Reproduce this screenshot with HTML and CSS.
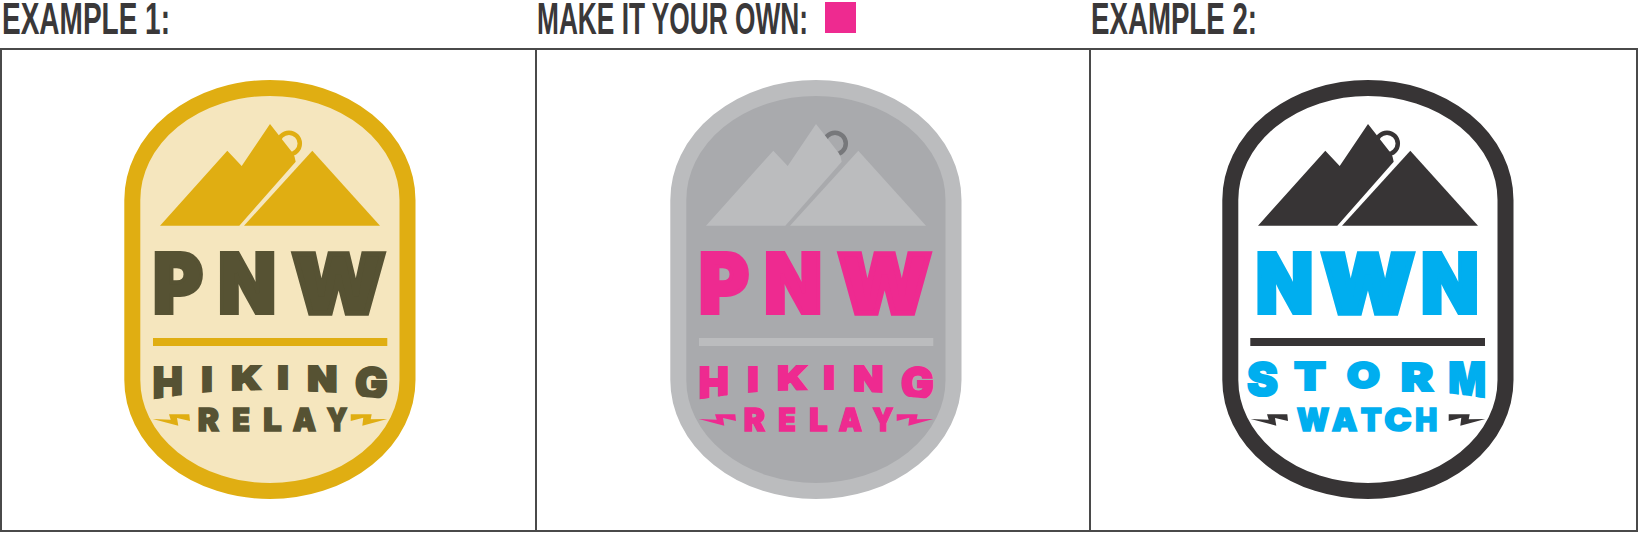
FILE: index.html
```html
<!DOCTYPE html>
<html lang="en">
<head>
<meta charset="utf-8">
<title>Badge examples</title>
<link rel="stylesheet" href="styles.css">
</head>
<body>
<div class="page">
  <header class="heads">
    <div class="head"><svg class="label" width="280" height="44"><text x="0" y="34" textLength="168" lengthAdjust="spacingAndGlyphs">EXAMPLE 1:</text></svg></div>
    <div class="head"><svg class="label" width="450" height="44"><text x="0" y="34" textLength="271" lengthAdjust="spacingAndGlyphs">MAKE IT YOUR OWN:</text></svg><span class="swatch"></span></div>
    <div class="head"><svg class="label" width="280" height="44"><text x="0" y="34" textLength="166" lengthAdjust="spacingAndGlyphs">EXAMPLE 2:</text></svg></div>
  </header>
  <main class="frame">
    <section class="panel panel-a">
      <svg class="badge badge-a" viewBox="124 80 292 420" width="292" height="420">
        <defs>
          <clipPath id="arc-hiking"><polygon points="150,360 390,360 390,399.5 355,396 337,393 307,391.5 288,390 278,390 262,390.3 231,391 212,392 202,393 183,395 152,399.5"/></clipPath>
        </defs>
        <path class="shell" d="M132.3 200A137.6 112 0 0 1 407.5 200V380A137.6 111 0 0 1 132.3 380Z"/>
        <circle class="ring" cx="289" cy="143.5" r="10.8"/>
        <path class="peak" d="M160 225.7L227.3 150.7L241.7 166L270 124L292.5 152.7L294.5 156.5L295.7 161.7L239.3 225.7Z"/>
        <path class="peak" d="M312.3 150.7L380 225.7H244Z"/>
        <text class="big" x="153" y="313" textLength="50" lengthAdjust="spacingAndGlyphs">P</text>
        <text class="big" x="218.3" y="313" textLength="57.7" lengthAdjust="spacingAndGlyphs">N</text>
        <text class="big wide" x="292.5" y="312.5" textLength="92.3" lengthAdjust="spacingAndGlyphs">W</text>
        <rect class="bar" x="153" y="338" width="234.3" height="8"/>
        <g clip-path="url(#arc-hiking)">
          <text class="word" font-size="44" x="152.7" y="398.5" textLength="30" lengthAdjust="spacingAndGlyphs">H</text>
          <text class="word" font-size="34.7" x="201.5" y="391.6" textLength="11" lengthAdjust="spacingAndGlyphs">I</text>
          <text class="word" font-size="32.7" x="231.3" y="390" textLength="30.4" lengthAdjust="spacingAndGlyphs">K</text>
          <text class="word" font-size="31.6" x="277.5" y="389.2" textLength="11" lengthAdjust="spacingAndGlyphs">I</text>
          <text class="word" font-size="35.2" x="307.3" y="392" textLength="30" lengthAdjust="spacingAndGlyphs">N</text>
          <text class="word" font-size="44" x="355" y="398.5" textLength="32.7" lengthAdjust="spacingAndGlyphs">G</text>
        </g>
        <g class="small">
          <text x="197.7" y="431" textLength="21.3" lengthAdjust="spacingAndGlyphs">R</text>
          <text x="232.3" y="431" textLength="17.7" lengthAdjust="spacingAndGlyphs">E</text>
          <text x="263.3" y="431" textLength="18.4" lengthAdjust="spacingAndGlyphs">L</text>
          <text x="292.7" y="431" textLength="23.3" lengthAdjust="spacingAndGlyphs">A</text>
          <text x="326.7" y="431" textLength="20.6" lengthAdjust="spacingAndGlyphs">Y</text>
        </g>
        <path class="bolt" d="M152.7 419L170.7 419.7L169 414.3H189.3L190 421L177 418L178.3 425.7Z"/>
        <path class="bolt" d="M350.7 414.3H371.7L370.7 419.3L387.3 419L362.3 425.7L363.3 417.7L350.7 421Z"/>
      </svg>
    </section>
    <section class="panel panel-b">
      <svg class="badge badge-b" viewBox="124 80 292 420" width="292" height="420">
        <defs>
          <clipPath id="arc-hiking-b"><polygon points="150,360 390,360 390,399.5 355,396 337,393 307,391.5 288,390 278,390 262,390.3 231,391 212,392 202,393 183,395 152,399.5"/></clipPath>
        </defs>
        <path class="shell" d="M132.3 200A137.6 112 0 0 1 407.5 200V380A137.6 111 0 0 1 132.3 380Z"/>
        <circle class="ring" cx="289" cy="143.5" r="10.8"/>
        <path class="peak" d="M160 225.7L227.3 150.7L241.7 166L270 124L292.5 152.7L294.5 156.5L295.7 161.7L239.3 225.7Z"/>
        <path class="peak" d="M312.3 150.7L380 225.7H244Z"/>
        <text class="big" x="153" y="313" textLength="50" lengthAdjust="spacingAndGlyphs">P</text>
        <text class="big" x="218.3" y="313" textLength="57.7" lengthAdjust="spacingAndGlyphs">N</text>
        <text class="big wide" x="292.5" y="312.5" textLength="92.3" lengthAdjust="spacingAndGlyphs">W</text>
        <rect class="bar" x="153" y="338" width="234.3" height="8"/>
        <g clip-path="url(#arc-hiking-b)">
          <text class="word" font-size="44" x="152.7" y="398.5" textLength="30" lengthAdjust="spacingAndGlyphs">H</text>
          <text class="word" font-size="34.7" x="201.5" y="391.6" textLength="11" lengthAdjust="spacingAndGlyphs">I</text>
          <text class="word" font-size="32.7" x="231.3" y="390" textLength="30.4" lengthAdjust="spacingAndGlyphs">K</text>
          <text class="word" font-size="31.6" x="277.5" y="389.2" textLength="11" lengthAdjust="spacingAndGlyphs">I</text>
          <text class="word" font-size="35.2" x="307.3" y="392" textLength="30" lengthAdjust="spacingAndGlyphs">N</text>
          <text class="word" font-size="44" x="355" y="398.5" textLength="32.7" lengthAdjust="spacingAndGlyphs">G</text>
        </g>
        <g class="small">
          <text x="197.7" y="431" textLength="21.3" lengthAdjust="spacingAndGlyphs">R</text>
          <text x="232.3" y="431" textLength="17.7" lengthAdjust="spacingAndGlyphs">E</text>
          <text x="263.3" y="431" textLength="18.4" lengthAdjust="spacingAndGlyphs">L</text>
          <text x="292.7" y="431" textLength="23.3" lengthAdjust="spacingAndGlyphs">A</text>
          <text x="326.7" y="431" textLength="20.6" lengthAdjust="spacingAndGlyphs">Y</text>
        </g>
        <path class="bolt" d="M152.7 419L170.7 419.7L169 414.3H189.3L190 421L177 418L178.3 425.7Z"/>
        <path class="bolt" d="M350.7 414.3H371.7L370.7 419.3L387.3 419L362.3 425.7L363.3 417.7L350.7 421Z"/>
      </svg>
    </section>
    <section class="panel panel-c">
      <svg class="badge badge-c" viewBox="124 80 292 420" width="292" height="420">
        <defs>
          <clipPath id="arc-storm"><polygon points="140,355 395,355 395,399.5 372,396 350,393.3 340,392 140,400"/></clipPath>
        </defs>
        <path class="shell" d="M132.3 200A137.6 112 0 0 1 407.5 200V380A137.6 111 0 0 1 132.3 380Z"/>
        <circle class="ring" cx="289" cy="143.5" r="10.8"/>
        <path class="peak" d="M160 225.7L227.3 150.7L241.7 166L270 124L292.5 152.7L294.5 156.5L295.7 161.7L239.3 225.7Z"/>
        <path class="peak" d="M312.3 150.7L380 225.7H244Z"/>
        <text class="big" x="157.7" y="313.3" textLength="57.6" lengthAdjust="spacingAndGlyphs">N</text>
        <text class="big wide" x="223.8" y="312.8" textLength="92.4" lengthAdjust="spacingAndGlyphs">W</text>
        <text class="big" x="323" y="313.3" textLength="57.7" lengthAdjust="spacingAndGlyphs">N</text>
        <rect class="bar" x="152.3" y="338" width="234.7" height="8"/>
        <g clip-path="url(#arc-storm)">
          <text class="word" font-size="46.5" x="149" y="396" textLength="31" lengthAdjust="spacingAndGlyphs">S</text>
          <text class="word" font-size="38.5" x="196" y="390.3" textLength="32" lengthAdjust="spacingAndGlyphs">T</text>
          <text class="word" font-size="36" x="248.7" y="388" textLength="33.3" lengthAdjust="spacingAndGlyphs">O</text>
          <text class="word" font-size="39" x="302.7" y="390.7" textLength="32.6" lengthAdjust="spacingAndGlyphs">R</text>
          <text class="word" font-size="49.5" x="350.3" y="398.2" textLength="37.7" lengthAdjust="spacingAndGlyphs">M</text>
        </g>
        <g class="small">
          <text x="198.7" y="431" textLength="32.6" lengthAdjust="spacingAndGlyphs">W</text>
          <text x="233.7" y="431" textLength="25.6" lengthAdjust="spacingAndGlyphs">A</text>
          <text x="262.7" y="431" textLength="21" lengthAdjust="spacingAndGlyphs">T</text>
          <text x="286.3" y="431" textLength="27.4" lengthAdjust="spacingAndGlyphs">C</text>
          <text x="317.3" y="431" textLength="22" lengthAdjust="spacingAndGlyphs">H</text>
        </g>
        <path class="bolt" d="M152.7 419L170.7 419.7L169 414.3H189.3L190 421L177 418L178.3 425.7Z"/>
        <path class="bolt" d="M350.7 414.3H371.7L370.7 419.3L387.3 419L362.3 425.7L363.3 417.7L350.7 421Z"/>
      </svg>
    </section>
  </main>
</div>
</body>
</html>
```
FILE: styles.css
```css
* { box-sizing: border-box; }
html, body { margin: 0; padding: 0; background: #fff; overflow: hidden; }

.page { width: 1638px; height: 533px; }

.heads {
  display: grid;
  grid-template-columns: 535px 554px 1fr;
  height: 48px;
}
.head {
  display: flex;
  align-items: flex-start;
  height: 48px;
  padding-left: 2px;
}

.label { display: block; flex: none; }
.label text {
  font-family: "Liberation Sans", sans-serif;
  font-weight: 700;
  font-size: 45px;
  fill: #3a3839;
}
.swatch {
  flex: none;
  width: 31px;
  height: 31px;
  margin: 2px 0 0 -162px;
  background: #ee2a90;
}

.frame {
  display: grid;
  grid-template-columns: 533px 554px 1fr;
  height: 484px;
  border: 2px solid #4a4a4a;
}
.panel { padding-top: 30px; min-width: 0; }
.panel + .panel { border-left: 2px solid #4a4a4a; }
.panel-a { padding-left: 122px; }
.panel-b { padding-left: 133px; }
.panel-c { padding-left: 131px; }

.badge { display: block; }
.badge-a { --edge: #e0ae12; --fill: #f5e6be; --peak: #e0ae12; --ring: #e0ae12; --rule: #e0ae12; --ink: #565233; --bolt: #e0ae12; }
.badge-b { --edge: #bbbcbe; --fill: #a9aaad; --peak: #bbbcbe; --ring: #77787b; --rule: #bbbcbe; --ink: #ee2a90; --bolt: #ee2a90; }
.badge-c { --edge: #373435; --fill: #ffffff; --peak: #373435; --ring: #373435; --rule: #373435; --ink: #00aeef; --bolt: #373435; }

.shell { fill: var(--fill); stroke: var(--edge); stroke-width: 16; }
.ring { fill: none; stroke: var(--ring); stroke-width: 4.5; }
.peak { fill: var(--peak); }
.bar { fill: var(--rule); }
.bolt { fill: var(--bolt); }

.big, .word, .small text {
  font-family: Inter, "Liberation Sans", sans-serif;
  font-weight: 900;
  fill: var(--ink);
  stroke: var(--ink);
  stroke-linejoin: miter;
}
.big { font-size: 83px; stroke-width: 4; }
.big.wide { font-size: 81px; stroke-width: 5.5; }
.word { stroke-width: 2; }
.small text { font-size: 31.7px; stroke-width: 1.5; }
```
